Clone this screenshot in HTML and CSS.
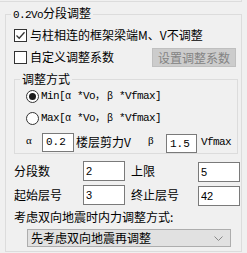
FILE: index.html
```html
<!DOCTYPE html>
<html lang="zh-CN">
<head>
    <meta charset="UTF-8">
    <title>0.2Vo分段调整</title>
    <link rel="stylesheet" href="styles.css">
</head>
<body>
    <div class="prev-group"></div>

    <fieldset class="group">
        <legend class="outer-legend"><span class="mono">0.2Vo</span>分段调整</legend>

        <div class="row check-row">
            <span class="check">
                <svg width="11" height="11" viewBox="0 0 11 11"><path d="M1.5 5.5 L4.2 8.2 L9.5 2.2" fill="none" stroke="#333" stroke-width="1.3"/></svg>
            </span>
            <span>与柱相连的框架梁端M、V不调整</span>
        </div>

        <div class="row custom-row">
            <span class="check"></span>
            <span>自定义调整系数</span>
            <button class="btn" disabled>设置调整系数</button>
        </div>

        <fieldset class="group inner">
            <legend class="inner-legend">调整方式</legend>

            <div class="row radio-row">
                <span class="radio checked"></span>
                <span class="mono">Min[<span class="wide">α</span>*Vo<span class="wide">，</span><span class="wide">β</span>*Vfmax]</span>
            </div>
            <div class="row radio-row">
                <span class="radio"></span>
                <span class="mono">Max[<span class="wide">α</span>*Vo<span class="wide">，</span><span class="wide">β</span>*Vfmax]</span>
            </div>

            <div class="row coef-row">
                <span class="greek">α</span>
                <input class="coef" type="text" value="0.2" readonly>
                <span class="coef-label">楼层剪力V</span>
                <span class="greek beta">β</span>
                <input class="coef coef-b" type="text" value="1.5" readonly>
                <span class="mono vf">Vfmax</span>
            </div>
        </fieldset>

        <div class="params">
            <span>分段数</span>
            <input class="field" type="text" value="2" readonly>
            <span>上限</span>
            <input class="field low" type="text" value="5" readonly>
            <span>起始层号</span>
            <input class="field" type="text" value="3" readonly>
            <span>终止层号</span>
            <input class="field low" type="text" value="42" readonly>
        </div>

        <div class="row note-row">考虑双向地震时内力调整方式:</div>

        <div class="select">
            <span>先考虑双向地震再调整</span>
            <svg width="9" height="5" viewBox="0 0 9 5"><path d="M0.5 0.5 L4.5 4.5 L8.5 0.5" fill="none" stroke="#888" stroke-width="1"/></svg>
        </div>
    </fieldset>
</body>
</html>
```

FILE: styles.css
```css
body {
    margin: 0;
    background: #f0f0f0;
    font-family: "Noto Sans CJK SC", sans-serif;
    font-size: 12px;
    line-height: 14px;
    color: #000;
}

.prev-group {
    width: 241px;
    height: 1px;
    border-bottom: 1px solid #dcdcdc;
    border-right: 1px solid #dcdcdc;
}

.mono {
    font-family: "Liberation Mono", "Noto Sans CJK SC", monospace;
    font-size: 11px;
    letter-spacing: -0.6px;
}

.mono .wide {
    letter-spacing: 0;
    font-size: 10px;
}

.group {
    margin: 4px 0 0 5px;
    width: 237px;
    box-sizing: border-box;
    border: 1px solid #dcdcdc;
    padding: 5px 3px 4px 8px;
    min-width: 0;
}

.group legend {
    padding: 0 2px;
    line-height: 14px;
    font-size: 12px;
}

.outer-legend {
    margin-left: -3px;
}

.row {
    display: flex;
    align-items: center;
    white-space: nowrap;
}

.check-row {
    height: 16px;
}

.check {
    width: 13px;
    height: 13px;
    box-sizing: border-box;
    border: 1px solid #333;
    background: #fff;
    margin-right: 3px;
    display: flex;
    align-items: center;
    justify-content: center;
}

.custom-row {
    height: 20px;
    margin-top: 4px;
}

.btn {
    margin-left: auto;
    margin-right: 2px;
    width: 84px;
    height: 19px;
    padding: 0;
    background: #cccccc;
    border: 1px solid #bfbfbf;
    color: #838383;
    font-family: "Noto Sans CJK SC", sans-serif;
    font-size: 12px;
    line-height: 15px;
}

.inner {
    margin: 5px 0 0 0;
    width: 224px;
    padding: 1px 3px 1px 11px;
}

.inner-legend {
    margin-left: -6px;
}

.radio-row {
    height: 18px;
}

.radio-row + .radio-row {
    margin-top: 4px;
}

.radio {
    width: 13px;
    height: 13px;
    box-sizing: border-box;
    border: 1px solid #333;
    border-radius: 50%;
    background: #fff;
    margin-right: 2px;
    display: flex;
    align-items: center;
    justify-content: center;
}

.radio.checked::after {
    content: "";
    width: 7px;
    height: 7px;
    border-radius: 50%;
    background: #1a1a1a;
}

.wide {
    display: inline-block;
    width: 12px;
}

.coef-row {
    height: 20px;
    margin-top: 5px;
}

.greek {
    width: 16px;
    font-family: "Liberation Serif", serif;
    font-size: 11px;
    align-self: flex-start;
    margin-top: 1px;
}

.coef {
    width: 32px;
    height: 19px;
    box-sizing: border-box;
    border: 1px solid #7a7a7a;
    background: #fff;
    padding: 0 0 0 3px;
    margin: 0 2px 0 0;
    font-family: "Liberation Mono", monospace;
    font-size: 11px;
    outline: none;
}

.coef-label {
    width: 72px;
}

.beta {
    width: 18px;
}

.coef-b {
    width: 31px;
    margin-top: 3px;
    margin-right: 4px;
}

.vf {
    align-self: flex-start;
    margin-top: 3px;
}

.params {
    display: grid;
    grid-template-columns: 66px 42px 67px 42px;
    column-gap: 3px;
    row-gap: 2px;
    align-items: center;
    margin-top: 6px;
}

.params span:nth-of-type(2n) {
    padding-left: 3px;
}

.field {
    width: 42px;
    height: 20px;
    box-sizing: border-box;
    border: 1px solid #7a7a7a;
    background: #fff;
    padding: 0 0 0 2px;
    margin: 0;
    font-family: "Liberation Sans", sans-serif;
    font-size: 11px;
    outline: none;
}

.field.low {
    margin-top: 2px;
}

.note-row {
    height: 16px;
    margin-top: 3px;
}

.select {
    margin: 4px 0 0 13px;
    width: 204px;
    height: 18px;
    box-sizing: border-box;
    border: 1px solid #adadad;
    background: #e1e1e1;
    display: flex;
    align-items: center;
    justify-content: space-between;
    padding: 0 7px 0 3px;
}
```
